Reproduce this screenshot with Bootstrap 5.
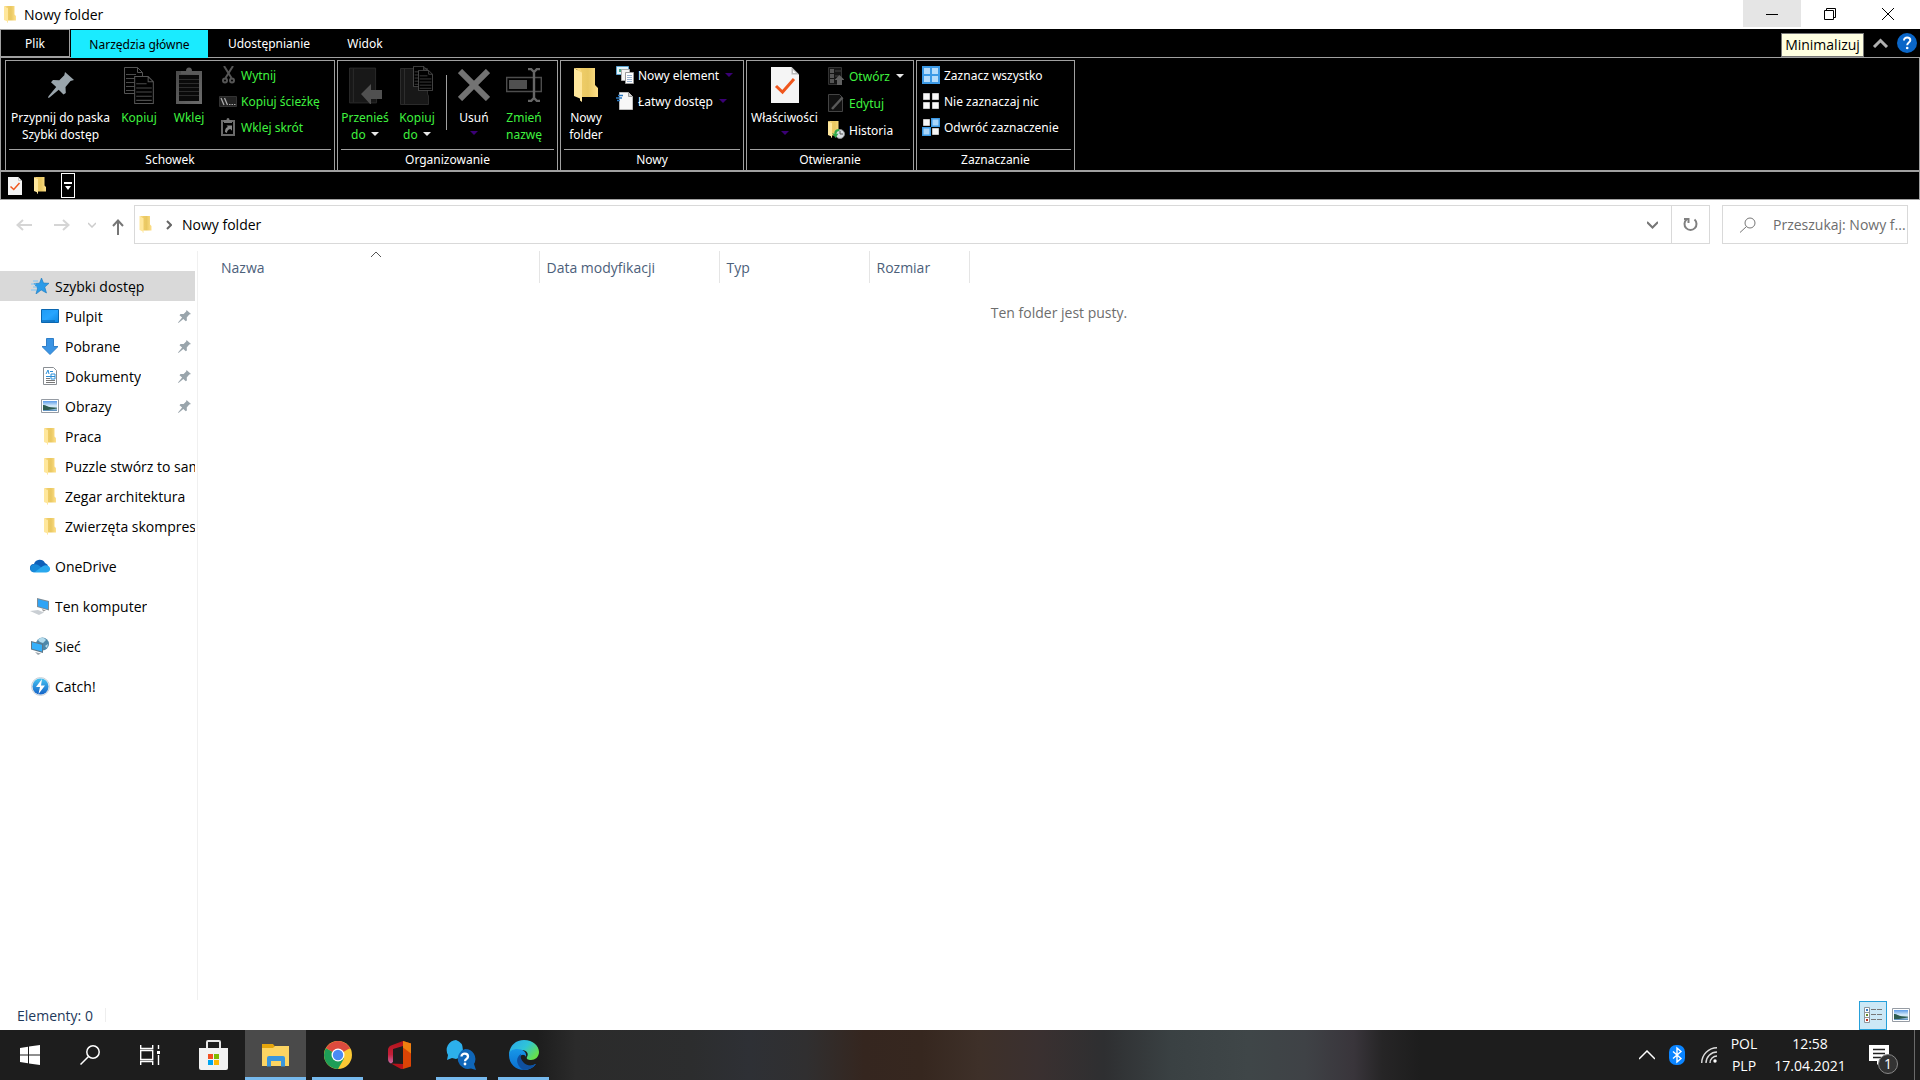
<!DOCTYPE html>
<html lang="pl">
<head>
<meta charset="utf-8">
<meta name="viewport" content="width=device-width, initial-scale=1">
<title>Nowy folder</title>
<link href="https://cdn.jsdelivr.net/npm/bootstrap@5.3.0/dist/css/bootstrap.min.css" rel="stylesheet">
<style>
:root{--line:#a0a0a0;--off:#3ff23f}
body{font-family:"Open Sans","Noto Sans",sans-serif;font-size:14px;line-height:20px;color:#000;background:#fff;overflow:hidden}
button{font:inherit;color:inherit;background:none;border:0;padding:0}
svg{display:block;flex:none}
a{color:inherit;text-decoration:none}
/* title bar */
.titlebar{height:29px;padding-right:3px}
.winbtn{width:58px;height:27px;display:flex;align-items:center;justify-content:center}
.winbtn.hot{background:#e5e5e5}
/* ribbon */
.ribbon{background:#000;color:#fff;font-family:"Noto Sans","Open Sans",sans-serif;font-size:12px;line-height:17px}
.tabrow{height:28px}
.tabrow .nav-link{color:#fff;padding:0;height:28px;display:flex;align-items:center;justify-content:center}
.tabrow .t-file{width:70px;border:1px solid var(--line)}
.tabrow .t-home{width:137px;margin-left:1px;margin-top:1px;background:#1aebff;color:#000}
.tabrow .t-share{width:122px}
.tabrow .t-view{width:70px}
.tabtools{padding-right:3px}
.tip{background:#ffffe1;color:#000;border:1px solid #767676;font-family:"Open Sans","Noto Sans",sans-serif;font-size:14px;line-height:22px;width:83px;height:24px;text-align:center}
.panel{border:1px solid var(--line);border-bottom-width:2px;padding:2px 4px 0;gap:2px;height:115px}
.grp{border:1px solid var(--line);border-bottom:0;height:110px;flex:none}
.g-clip{width:330px}
.g-org{width:221px}
.g-new{width:184px}
.g-open{width:168px}
.g-sel{width:159px}
.grp-body{height:88px;padding-top:4px}
.g-clip .grp-body{padding-left:1px}
.grp-name{border-top:1px solid var(--line);margin:0 3px;height:21px;line-height:19px;text-align:center}
.big{display:flex;flex-direction:column;align-items:center;text-align:center;white-space:nowrap;height:82px}
.big .ic{height:40px;margin-bottom:4px;display:flex;align-items:center}
.w107{width:107px}.w50{width:50px}.w54{width:54px}.w75{width:75px}
.off{color:var(--off)}
.vline{width:1px;height:55px;margin:10px 2px 0 4px;background:var(--line)}
.minis{padding-top:1px;gap:8px;margin-left:5px}
.minis.loose{padding-top:2px;gap:9px}
.mini{display:flex;align-items:center;height:18px;gap:4px;white-space:nowrap}
.mini .ic{width:18px;display:flex;justify-content:center}
.drop{display:inline-block;border:4px solid transparent;border-top-color:#e8e8e8;border-bottom:0;margin-left:2px;vertical-align:3px}
.drop.dim{border-top-color:#3a0075}
.big>.drop{margin:5px 0 0}
.qat{border:1px solid var(--line);border-top:0;height:28px;padding-left:7px}
.qatmore{border:1px solid #fff;width:14px;height:25px;margin-left:15px;display:flex;align-items:center;justify-content:center}
/* address row */
.addr-row{padding:5px 12px 7px 0}
.navbtns{width:134px;padding-left:16px}
.navbtns .fwd{margin-left:22px}
.navbtns .rec{margin-left:18px}
.addr{border:1px solid #d9d9d9;height:39px}
.addr-mark{margin:0 10px 0 14px}
.addr-end{width:38px}
.addr-end+.addr-end{border-left:1px solid #d9d9d9}
.find{border:1px solid #d9d9d9;width:186px;height:39px;margin-left:12px;padding-left:17px;gap:17px}
.find input{border:0;outline:0;width:134px;padding:0;color:#6d6d6d;background:none}
.find input::placeholder{color:#6d6d6d;opacity:1}
/* panes */
.side{width:198px;border-right:1px solid #f0f0f0;padding-top:20px}
.side a{display:flex;align-items:center;width:195px;height:30px;white-space:nowrap;overflow:hidden;padding-left:30px;gap:5px}
.side a.sub{padding-left:40px}
.side a .ic{width:20px;flex:none;display:flex;justify-content:center}
.side a.on{background:#d9d9d9}
.side .lbl{overflow:hidden;padding-top:2px}
.side .pin{margin-left:auto;margin-right:4px}
.side .top{margin-top:10px}
.cols{table-layout:fixed;width:771px;margin:0}
.cols th{font-weight:400;color:#4c607a;height:32px;padding:2px 0 0 7px;border-right:1px solid #e5e5e5;vertical-align:middle;position:relative}
.cols th:first-child{padding-left:23px;width:341px}
.sortmark{position:absolute;left:172px;top:0}
.void{color:#6d6d6d;margin-top:20px}
.status{height:30px;color:#1e395b;padding:0 10px 0 17px}
.status .count{padding-top:2px}
.status .sep{width:1px;height:14px;background:#eee;margin-left:12px}
.vbtn{width:28px;height:29px;margin-right:5px;display:flex;align-items:center;justify-content:center}
.vbtn.on{background:#cce8f6;border:1px solid #26a0da}
/* taskbar */
.task{height:50px;color:#fff;background:linear-gradient(90deg,#1d1d1d 0,#1d1d1d 28%,#2b2b2b 30%,#2c2d2e 36%,#2e3035 39%,#302f30 42%,#35261f 45%,#36271f 48%,#3e3029 51%,#3a3030 54%,#2e2f31 57.5%,#3a4143 61%,#3f4648 65%,#3f4246 68%,#39353b 70.5%,#262526 72%,#1d1d1d 74%)}
.tb{width:60px;height:50px;display:flex;align-items:center;justify-content:center}
.apps{gap:1px;margin-left:3px}
.app{width:61px;position:relative}
.app.cur{background:#4a4a4a}
.app.run::after{content:"";position:absolute;left:5px;right:5px;bottom:0;height:3px;background:#76b9ed}
.app.cur::after{left:0;right:0}
.tray{line-height:22px;text-align:center}
.tray .bt{width:16px;margin-left:14px}
.tray .lang{width:42px;margin-left:6px}
.tray .clock{width:90px;margin-right:3px}
.note{position:relative;width:57px;height:50px;border-right:1px solid #6a6a6a;margin-right:5px}
.note svg{position:absolute;left:11px;top:15px}
.note span{position:absolute;left:20px;top:24px;width:20px;height:20px;border-radius:50%;background:#333;border:1px solid #888;line-height:18px;font-size:14px}
</style>
<script src="https://cdn.jsdelivr.net/npm/bootstrap@5.3.0/dist/js/bootstrap.bundle.min.js"></script>
</head>
<body class="d-flex flex-column vh-100">
<svg width="0" height="0" class="position-absolute" aria-hidden="true">
<defs>
<linearGradient id="gf" x1="0" x2="1"><stop offset="0" stop-color="#f2cf6b"/><stop offset=".5" stop-color="#e9c862"/><stop offset="1" stop-color="#ffe08a"/></linearGradient>
<linearGradient id="gsky" x1="0" y1="0" x2="0" y2="1"><stop offset="0" stop-color="#5b9be8"/><stop offset=".5" stop-color="#d8ecfa"/><stop offset=".75" stop-color="#b5d4ea"/><stop offset="1" stop-color="#4f86b8"/></linearGradient>
<linearGradient id="gblue" x1="0" y1="0" x2="1" y2="1"><stop offset="0" stop-color="#1e9bf5"/><stop offset=".5" stop-color="#27a5ff"/><stop offset="1" stop-color="#0d86e0"/></linearGradient>
<linearGradient id="gcatch" x1="0" y1="0" x2="0" y2="1"><stop offset="0" stop-color="#45c3f2"/><stop offset="1" stop-color="#1463c8"/></linearGradient>
<linearGradient id="gclip" x1="0" y1="0" x2="1" y2="1"><stop offset="0" stop-color="#4a4a4a"/><stop offset="1" stop-color="#6c6c6c"/></linearGradient>
<linearGradient id="ge1" x1="0" y1="0" x2="1" y2=".6"><stop offset="0" stop-color="#2aa6ea"/><stop offset=".55" stop-color="#2fc4d8"/><stop offset="1" stop-color="#66e04c"/></linearGradient>
<linearGradient id="ge2" x1="0" y1="0" x2="0" y2="1"><stop offset="0" stop-color="#1797e8"/><stop offset="1" stop-color="#0b6fd0"/></linearGradient>
<linearGradient id="goff" x1="0" y1="0" x2="0" y2="1"><stop offset="0" stop-color="#b01318"/><stop offset=".6" stop-color="#c4203a"/><stop offset="1" stop-color="#c86aa8"/></linearGradient>
</defs>
<symbol id="folder" viewBox="0 0 24 34"><path d="M4 0h17v17l3 3v9H4z" fill="url(#gf)"/><path d="M0 0l8 4.500v29.500l-2-1.500v-2L0 28z" fill="#ffe79c"/><path d="M0 0h6l2 4.500z" fill="#f7d67a"/></symbol>
<symbol id="pushpin" viewBox="0 0 26 26"><path d="M17 0l9 8-3.500 1-5 6 .3 6-2.300 1.500-4.800-4.700L1.500 25.500 0 26l.5-1.700 7.700-9.300L3 10.300 5 8l6.300.2 5-5z" fill="#9aa5ac"/></symbol>
<symbol id="pic" viewBox="0 0 18 14"><path d="M.5.5h17v13H.5z" fill="#fff" stroke="#959ba3"/><path d="M2 2h14v10H2z" fill="url(#gsky)"/><path d="M2 6c3 .2 4 1.500 8 2.300l6 .5v.7l-9 1.500H2z" fill="#2e5c50"/></symbol>
<symbol id="check" viewBox="0 0 28 36"><path d="M0 0h20.500L28 7.500V36H0z" fill="#f5f5f5"/><path d="M20.500 0v7.500H28z" fill="#b9b9b9"/><path d="M22 3v3h3z" fill="#fff"/><path d="M5 19l6.500 6L23 12" fill="none" stroke="#f0561d" stroke-width="3"/></symbol>
<symbol id="sheet" viewBox="0 0 19 27"><path d="M.5.5h13l5 5v21H.5zM13.500.5v5h5" fill="#000" stroke="#555"/><path d="M2 7.500h10M2 11.500h15M2 15.500h15M2 19.500h15M2 23.500h15" stroke="#4b4b4b"/></symbol>
<symbol id="book" viewBox="0 0 30 37"><path d="M.5.5h27V26l1 2v8.500H.5z" fill="#181818" stroke="#2b2b2b"/><path d="M4.500 1v35" stroke="#2d2d2d"/></symbol>
</svg>

<header class="titlebar d-flex align-items-start bg-white">
  <div class="d-flex align-items-center ps-1 h-100 gap-2"><svg width="12" height="17"><use href="#folder"/></svg><span>Nowy folder</span></div>
  <div class="ms-auto d-flex">
    <button class="winbtn hot" aria-label="Minimalizuj"><svg width="12" height="12"><path d="M0 6.500h12" stroke="#000"/></svg></button>
    <button class="winbtn" aria-label="Przywróć"><svg width="12" height="12" fill="none" stroke="#000"><path d="M.5 2.500h9v9h-9zM2.500 2.500v-2h9v9h-2"/></svg></button>
    <button class="winbtn" aria-label="Zamknij"><svg width="12" height="12"><path d="M0 0l12 12M12 0L0 12" stroke="#000"/></svg></button>
  </div>
</header>

<section class="ribbon">
  <div class="tabrow d-flex">
    <nav class="nav">
      <a class="nav-link t-file" href="#">Plik</a>
      <a class="nav-link t-home" href="#">Narzędzia główne</a>
      <a class="nav-link t-share" href="#">Udostępnianie</a>
      <a class="nav-link t-view" href="#">Widok</a>
    </nav>
    <div class="tabtools ms-auto d-flex align-items-center">
      <div class="tip mt-1" role="tooltip">Minimalizuj</div>
      <button class="ms-2" aria-label="Zwiń wstążkę"><svg width="17" height="10"><path d="M2 9l6.500-6.500L15 9" fill="none" stroke="#b0b0b0" stroke-width="3"/></svg></button>
      <button class="ms-2" aria-label="Pomoc"><svg width="20" height="20"><circle cx="10" cy="10" r="10" fill="#0a66c8"/><path d="M7 7.500c0-4 6.300-3.600 6.300-.3 0 2.400-3.100 2.400-3.100 5" fill="none" stroke="#fff" stroke-width="2"/><circle cx="10.200" cy="15" r="1.300" fill="#fff"/></svg></button>
    </div>
  </div>

  <div class="panel d-flex">
    <div class="grp g-clip">
      <div class="grp-body d-flex">
        <button class="big w107"><span class="ic"><svg width="26" height="26"><use href="#pushpin"/></svg></span>Przypnij do paska<br>Szybki dostęp</button>
        <button class="big w50 off"><span class="ic"><svg width="31" height="37"><use href="#sheet" width="19" height="27"/><use href="#sheet" x="10" y="9" width="20" height="28"/></svg></span>Kopiuj</button>
        <button class="big w50 off"><span class="ic"><svg width="26" height="37"><path d="M0 4h26v33H0z" fill="url(#gclip)"/><path d="M3 8h20v26H3z" fill="#0a0a0a"/><path d="M3 12.500h20M3 16.500h20M3 20.500h20M3 24.500h20M3 28.500h20" stroke="#2c2c2c"/><path d="M5 7V4h5a3 3.500 0 0 1 6 0h5v3z" fill="#5a5a5a"/></svg></span>Wklej</button>
        <div class="minis d-flex flex-column">
          <button class="mini off"><span class="ic"><svg width="13" height="18" fill="none" stroke="#555" stroke-width="2"><path d="M2 0l7.500 12M11 0L3.500 12"/><circle cx="3" cy="14.500" r="2"/><circle cx="10" cy="14.500" r="2"/></svg></span>Wytnij</button>
          <button class="mini off"><span class="ic"><svg width="18" height="11"><path d="M.5.5h17v10H.5z" fill="#222" stroke="#333"/><path d="M2 2l3 7M5.500 2l3 7" stroke="#aaa" stroke-width="1.300"/><path d="M10 8.500h1.500M12.500 8.500H14M15 8.500h1.500" stroke="#aaa"/></svg></span>Kopiuj ścieżkę</button>
          <button class="mini off"><span class="ic"><svg width="14" height="18"><path d="M1 3h12v14H1z" fill="none" stroke="#6a6a6a" stroke-width="2"/><path d="M3 5V2h2.500a1.500 2 0 0 1 3 0H11v3z" fill="#777"/><path d="M4 14c0-3 1-4.500 3-5L5.500 7.500H11v5.300L9.300 11C7 11.500 6 13 6 15z" fill="#888"/></svg></span>Wklej skrót</button>
        </div>
      </div>
      <div class="grp-name">Schowek</div>
    </div>

    <div class="grp g-org">
      <div class="grp-body d-flex">
        <button class="big w54 off"><span class="ic"><svg width="33" height="37"><use href="#book" width="29" height="37"/><path d="M12 27l10-10v6h11v9H22v6z" fill="#505050"/></svg></span>Przenieś<span>do <i class="drop"></i></span></button>
        <button class="big w50 off"><span class="ic"><svg width="34" height="39"><use href="#book" y="2" width="30" height="37"/><use href="#sheet" x="13" width="15" height="21"/><use href="#sheet" x="18" y="4" width="15" height="21"/></svg></span>Kopiuj<span>do <i class="drop"></i></span></button>
        <div class="vline"></div>
        <button class="big w50"><span class="ic"><svg width="32" height="32"><path d="M2 2l28 28M30 2L2 30" stroke="#737373" stroke-width="6"/></svg></span>Usuń<i class="drop dim"></i></button>
        <button class="big w50 off"><span class="ic"><svg width="36" height="34" fill="none"><path d="M.7 9.500h34.600v14H.7z" stroke="#4d4d4d" stroke-width="1.400"/><path d="M3 12h18v9H3z" fill="#505050"/><path d="M22 1h3l3 3 3-3h3M22 33h3l3-3 3 3h3M28 4v26" stroke="#666" stroke-width="2.400"/></svg></span>Zmień<br>nazwę</button>
      </div>
      <div class="grp-name">Organizowanie</div>
    </div>

    <div class="grp g-new">
      <div class="grp-body d-flex">
        <button class="big w50"><span class="ic"><svg width="24" height="34"><use href="#folder"/></svg></span>Nowy<br>folder</button>
        <div class="minis d-flex flex-column">
          <button class="mini"><span class="ic"><svg width="18" height="18"><path d="M.5.500h12v8H.5z" fill="#e4f3fb" stroke="#5aa3cf"/><path d="M3 3h3v3H3z" fill="#4a8"/><path d="M5.500 3.500h8v11h-8z" fill="#f4f4f4" stroke="#aaa"/><path d="M9.500 6.500h8v11h-8z" fill="#fff" stroke="#999"/><path d="M11 9.500h5M11 11.500h5M11 13.500h5M11 15.500h5" stroke="#9bb4d0"/></svg></span>Nowy element<i class="drop dim"></i></button>
          <button class="mini"><span class="ic"><svg width="18" height="18"><path d="M3.500.500h9l4 4v13h-13z" fill="#f7f7f7" stroke="#bbb"/><path d="M12.500.500v4h4" fill="#ccc" stroke="#999"/><path d="M2 3.500h5M0 6h6M1 8.500h3" stroke="#2b78c0" stroke-width="1.300"/></svg></span>Łatwy dostęp<i class="drop dim"></i></button>
        </div>
      </div>
      <div class="grp-name">Nowy</div>
    </div>

    <div class="grp g-open">
      <div class="grp-body d-flex">
        <button class="big w75"><span class="ic"><svg width="28" height="36"><use href="#check"/></svg></span>Właściwości<i class="drop dim"></i></button>
        <div class="minis loose d-flex flex-column">
          <button class="mini off"><span class="ic"><svg width="16" height="18"><path d="M.5.500h13v17H.5z" fill="#151515" stroke="#333"/><path d="M2 2h4v4H2zM2 7h4v4H2zM2 12h4v4H2z" fill="#555"/><path d="M7 4h6M7 9h4" stroke="#444"/><path d="M11.500 8l5 5H14v5H9v-5H6.500z" fill="#606060"/></svg></span>Otwórz<i class="drop"></i></button>
          <button class="mini off"><span class="ic"><svg width="16" height="18"><path d="M.5.500h11l3 3v14H.5z" fill="#111" stroke="#444"/><path d="M4 15L14.500 3.500" stroke="#5a5a5a" stroke-width="2.500"/></svg></span>Edytuj</button>
          <button class="mini"><span class="ic"><svg width="17" height="18"><use href="#folder" width="12" height="17"/><circle cx="12" cy="13" r="4.500" fill="#d8dde2" stroke="#888"/><path d="M12 10v3h3" stroke="#555" fill="none"/><path d="M11 8c-4 0-5 3-4.500 5L4 12l3.500 5 3-4.500-2 .5c0-2 1-3 3-3z" fill="#2fa84a"/></svg></span>Historia</button>
        </div>
      </div>
      <div class="grp-name">Otwieranie</div>
    </div>

    <div class="grp g-sel">
      <div class="grp-body d-flex">
        <div class="minis d-flex flex-column">
          <button class="mini"><span class="ic"><svg width="18" height="18"><path d="M0 0h18v18H0z" fill="#3c9ae6"/><path d="M2 2h6v6H2zM10 2h6v6h-6zM2 10h6v6H2zM10 10h6v6h-6z" fill="#b5dcfb"/></svg></span>Zaznacz wszystko</button>
          <button class="mini"><span class="ic"><svg width="18" height="18"><path d="M1.500 1.500h6v6h-6zM10.500 1.500h6v6h-6zM1.500 10.500h6v6h-6zM10.500 10.500h6v6h-6z" fill="#f7f7f7" stroke="#c8c8c8"/></svg></span>Nie zaznaczaj nic</button>
          <button class="mini"><span class="ic"><svg width="18" height="18"><path d="M1.500 1.500h6v6h-6zM10.500 10.500h6v6h-6z" fill="#f7f7f7" stroke="#c8c8c8"/><path d="M9.800.800h7.400v7.400H9.800zM.8 9.800h7.400v7.400H.8z" fill="#a8d5fa" stroke="#3c9ae6" stroke-width="1.500"/></svg></span>Odwróć zaznaczenie</button>
        </div>
      </div>
      <div class="grp-name">Zaznaczanie</div>
    </div>
  </div>

  <div class="qat d-flex align-items-center">
    <button aria-label="Właściwości"><svg width="14" height="18"><use href="#check"/></svg></button>
    <button class="ms-2 ps-1" aria-label="Nowy folder"><svg width="12" height="17"><use href="#folder"/></svg></button>
    <button class="qatmore" aria-label="Dostosuj pasek"><svg width="8" height="8"><path d="M0 0h8v2H0zM1 4h6L4 8z" fill="#fff"/></svg></button>
  </div>
</section>

<div class="addr-row d-flex">
  <div class="navbtns d-flex align-items-center">
    <button aria-label="Wstecz"><svg width="16" height="12" fill="none" stroke="#d5d5d5" stroke-width="2"><path d="M16 6H1.500M7 1L1.500 6 7 11"/></svg></button>
    <button class="fwd" aria-label="Dalej"><svg width="16" height="12" fill="none" stroke="#d5d5d5" stroke-width="2"><path d="M0 6h14.500M9 1l5.500 5L9 11"/></svg></button>
    <button class="rec" aria-label="Ostatnie"><svg width="8" height="6" fill="none" stroke="#ccc" stroke-width="1.500"><path d="M0 1l4 4 4-4"/></svg></button>
    <button class="ms-3 mt-1" aria-label="W górę"><svg width="12" height="16" fill="none" stroke="#767676" stroke-width="2"><path d="M6 16V1.500M1 7l5-5.500L11 7"/></svg></button>
  </div>
  <div class="addr d-flex flex-grow-1">
    <div class="d-flex align-items-center flex-grow-1 ps-1"><svg width="13" height="17"><use href="#folder"/></svg><svg class="addr-mark" width="6" height="10" fill="none" stroke="#666" stroke-width="2"><path d="M1 1l4 4-4 4"/></svg><a href="#">Nowy folder</a></div>
    <button class="addr-end d-flex align-items-center justify-content-center" aria-label="Poprzednie lokalizacje"><svg width="11" height="8" fill="none" stroke="#767676" stroke-width="2"><path d="M0 1l5.500 5.500L11 1"/></svg></button>
    <button class="addr-end d-flex align-items-center justify-content-center" aria-label="Odśwież"><svg width="15" height="15" fill="none" stroke="#808080" stroke-width="2"><path d="M3.500 2.500a6 6 0 1 0 8 0M1 2h4.500v4"/></svg></button>
  </div>
  <div class="find d-flex align-items-center">
    <label for="q" aria-label="Szukaj"><svg width="16" height="16" fill="none" stroke="#767676"><circle cx="10" cy="6" r="5"/><path d="M6.500 9.500L0 15.500"/></svg></label>
    <input id="q" type="text" placeholder="Przeszukaj: Nowy f...">
  </div>
</div>

<main class="d-flex flex-grow-1">
  <nav class="side flex-shrink-0">
    <a class="on" href="#"><span class="ic"><svg width="18" height="16"><path d="M10.500 0l2 5 5.500.3-4.200 3.800L15.500 15l-5.300-3L5 16l1.500-6L3 5.500l5.500-.3z" fill="#2b9be8" stroke="#1a78c0" stroke-width=".6"/><path d="M2 3h5M0 6h5M2 9h4M0 12h5" stroke="#7cc4f5"/></svg></span><span class="lbl">Szybki dostęp</span></a>
    <a class="sub" href="#"><span class="ic"><svg width="18" height="14"><path d="M.5.500h17v13H.5z" fill="url(#gblue)" stroke="#0a66b0"/><path d="M1 12h13" stroke="#0a5a9c"/></svg></span><span class="lbl">Pulpit</span><svg class="pin" width="13" height="13"><use href="#pushpin"/></svg></a>
    <a class="sub" href="#"><span class="ic"><svg width="16" height="17"><path d="M4.500.500h7v8H16l-8 8-8-8h4.500z" fill="#3a94e4" stroke="#2f7ec8"/></svg></span><span class="lbl">Pobrane</span><svg class="pin" width="13" height="13"><use href="#pushpin"/></svg></a>
    <a class="sub" href="#"><span class="ic"><svg width="14" height="18"><path d="M.5.500h10l3 3v14H.5z" fill="#fff" stroke="#8a8f94"/><path d="M3 7l2-4 1 4M7 4.500h3M3 9.500h9M8 7h4v5H8z" stroke="#2b8fd8" fill="none"/><path d="M3 11.500h4M3 13.500h9M3 15.500h9" stroke="#777"/></svg></span><span class="lbl">Dokumenty</span><svg class="pin" width="13" height="13"><use href="#pushpin"/></svg></a>
    <a class="sub" href="#"><span class="ic"><svg width="18" height="14"><use href="#pic"/></svg></span><span class="lbl">Obrazy</span><svg class="pin" width="13" height="13"><use href="#pushpin"/></svg></a>
    <a class="sub" href="#"><span class="ic"><svg width="12" height="17"><use href="#folder"/></svg></span><span class="lbl">Praca</span></a>
    <a class="sub" href="#"><span class="ic"><svg width="12" height="17"><use href="#folder"/></svg></span><span class="lbl">Puzzle stwórz to sam</span></a>
    <a class="sub" href="#"><span class="ic"><svg width="12" height="17"><use href="#folder"/></svg></span><span class="lbl">Zegar architektura</span></a>
    <a class="sub" href="#"><span class="ic"><svg width="12" height="17"><use href="#folder"/></svg></span><span class="lbl">Zwierzęta skompresowane</span></a>
    <a class="top" href="#"><span class="ic"><svg width="20" height="14"><path d="M4 13a4 4 0 0 1 0-8 6 6 0 0 1 11-1 5 5 0 0 1 1 9z" fill="#0d5fb8"/><path d="M4 13.500a4 4 0 0 1 1-8.300c3 0 5 2 7 3.800z" fill="#1688d8"/><path d="M4 13.500L13 7c4-2 8 1 7 4-.5 1.500-2 2.500-4 2.500z" fill="#29a8ee"/></svg></span><span class="lbl">OneDrive</span></a>
    <a class="top" href="#"><span class="ic"><svg width="20" height="17"><path d="M7 0l12 3v9.500L7 9z" fill="#7d8b96"/><path d="M8 1.200l10 2.500v7.500L8 8.300z" fill="#30a4f5"/><path d="M0 13l8-1 6 2.500L9 17z" fill="#c9ced3"/><path d="M12 11l4 1.500-3 1z" fill="#999"/></svg></span><span class="lbl">Ten komputer</span></a>
    <a class="top" href="#"><span class="ic"><svg width="20" height="18"><circle cx="12.500" cy="7" r="6.500" fill="#4d88aa"/><path d="M8 3c2-3 6-3 8 0l-3 3-3-1zM15 9l3-2-1 4z" fill="#b5dced"/><path d="M1 4l12 3v9L1 12.500z" fill="#5f7787"/><path d="M2 5.300l10 2.500v6.700L2 11.700z" fill="#35b0fa"/><path d="M5 15l6 1.500-3 1.500z" fill="#9aa4ab"/></svg></span><span class="lbl">Sieć</span></a>
    <a class="top" href="#"><span class="ic"><svg width="19" height="19"><circle cx="9.500" cy="9.500" r="9" fill="#e8edf2" stroke="#ccd3da"/><circle cx="9.500" cy="9.500" r="8" fill="url(#gcatch)"/><path d="M11 2L5 10h4l-1.500 7L14 8.500h-4z" fill="#fff"/></svg></span><span class="lbl">Catch!</span></a>
  </nav>
  <section class="flex-grow-1">
    <table class="cols">
      <thead><tr>
        <th scope="col">Nazwa<svg class="sortmark" width="12" height="7"><path d="M1 6l5-5 5 5" fill="none" stroke="#555"/></svg></th>
        <th scope="col" style="width:180px">Data modyfikacji</th>
        <th scope="col" style="width:150px">Typ</th>
        <th scope="col" style="width:100px">Rozmiar</th>
      </tr></thead>
    </table>
    <p class="void text-center mb-0">Ten folder jest pusty.</p>
  </section>
</main>

<footer class="status d-flex align-items-center">
  <span class="count">Elementy: 0</span><span class="sep"></span>
  <button class="vbtn on ms-auto" aria-label="Szczegóły"><svg width="18" height="16"><path d="M.5.500h5v15h-5zM.5 5.500h5M.5 10.500h5" fill="#fff" stroke="#8e959b"/><path d="M2 2h2v2H2z" fill="#3a78c0"/><path d="M2 7h2v2H2z" fill="#6a8a2a"/><path d="M2 12h2v2H2z" fill="#c03020"/><path d="M7 2.500h5M13 2.500h5M7 7.500h5M13 7.500h5M7 12.500h5M13 12.500h5" stroke="#777"/></svg></button>
  <button aria-label="Duże ikony"><svg width="18" height="14"><use href="#pic"/></svg></button>
</footer>

<div class="task d-flex">
  <button class="tb" aria-label="Start"><svg width="20" height="20"><path d="M0 3l8-1.200v7.700H0zM9 1.600L20 0v9.500H9zM0 10.500h8v7.700L0 17zM9 10.500h11V20L9 18.400z" fill="#fff"/></svg></button>
  <button class="tb" aria-label="Wyszukaj"><svg width="20" height="20" fill="none" stroke="#fff" stroke-width="1.500"><circle cx="13" cy="7" r="6.200"/><path d="M8.500 11.500L.5 19.500"/></svg></button>
  <button class="tb" aria-label="Widok zadań"><svg width="20" height="20" fill="none" stroke="#fff" stroke-width="1.400"><path d="M.7 0v3.500h12V0M.7 20v-3.500h12V20M.7 5.500h12v9H.7zM18.500 0v4M18.500 10v10"/><path d="M17 6h3v3h-3z" fill="#fff" stroke="none"/></svg></button>
  <div class="apps d-flex">
  <button class="tb app" aria-label="Sklep"><svg width="29" height="30"><path d="M8 9V2q0-1 1-1h11q1 0 1 1v7" fill="none" stroke="#e8e8e8" stroke-width="2"/><path d="M0 8h29v20q0 2-2 2H2q-2 0-2-2z" fill="#f2f2f2"/><path d="M9 14h5v5H9z" fill="#f25022"/><path d="M15 14h5v5h-5z" fill="#7fba00"/><path d="M9 20h5v5H9z" fill="#00a4ef"/><path d="M15 20h5v5h-5z" fill="#ffb900"/></svg></button>
  <button class="tb app cur run" aria-label="Eksplorator plików"><svg width="28" height="23"><path d="M0 0h11l2 2.500V6H0z" fill="#e5a50c"/><path d="M0 4h11l2-2h14v20H0z" fill="#fcd462"/><path d="M5 22.500V14q0-2 2-2h14q2 0 2 2v8.500h-4V17H9v5.500z" fill="#3a96dd"/></svg></button>
  <button class="tb app run" aria-label="Chrome"><svg width="28" height="28"><circle cx="14" cy="14" r="14" fill="#fcc934"/><path d="M14 14L1.900 7A14 14 0 0 0 14 28l6-10.500z" fill="#1e9e57"/><path d="M14 14L1.900 7a14 14 0 0 1 24.200 0z" fill="#dd4b3e"/><path d="M14 7.500h12.400L26.100 7 18 8z" fill="#dd4b3e"/><circle cx="14" cy="14" r="6.500" fill="#fff"/><circle cx="14" cy="14" r="5.200" fill="#4a8af4"/></svg></button>
  <button class="tb app" aria-label="Office"><svg width="24" height="28"><path d="M15 0l8 2.500v23L15 28z" fill="#dc4405"/><path d="M15 0L3 4.500Q0 6 0 9v9q0 3 3 4.500l2-1.500V8l10-3z" fill="url(#goff)"/><path d="M3 22.500L15 23v5h-2z" fill="#b5121b"/><path d="M15 0l8 2.500v10l-8-6z" fill="#f08010"/></svg></button>
  <button class="tb app run" aria-label="Uzyskaj pomoc"><svg width="31" height="30"><path d="M10 0a10 10 0 0 1 0 19l-4-1-5 2 1-5A10 10 0 0 1 10 0z" fill="#2cb0ec"/><path d="M19 9a10 10 0 0 1 9 15l2 6-5-1.500A10 10 0 1 1 19 9z" fill="#0f66b8"/><path d="M15.500 16.500c0-4 6.500-3.600 6.500 0 0 2.400-3 2.200-3 4.800" fill="none" stroke="#fff" stroke-width="2.300"/><circle cx="19" cy="24" r="1.400" fill="#fff"/></svg></button>
  <button class="tb app run" aria-label="Edge"><svg width="30" height="30"><path d="M0 14C1 5 7 0 15 0c9 0 15 6 15 12 0 5-4 8-8 8-3 0-5-1-4-3 2-3 0-7-5-7-6 0-10 3-13 4z" fill="url(#ge1)"/><path d="M0 15c0-4 4-6 8-6 6 0 10 3 9 8-1-3-5-3-6 0-2 5 3 10 9 9 3 0 6-2 7-2-3 4-7 6-12 6C7 30 0 24 0 15z" fill="url(#ge2)"/><path d="M12 14c-5 3-6 10 2 16 6 0 11-3 13-6-4 2-9 2-12-1s-4-6-3-9z" fill="#0f50a0"/></svg></button>
  </div>

  <div class="tray ms-auto d-flex align-items-center">
    <button aria-label="Ukryte ikony"><svg width="16" height="10" fill="none" stroke="#fff" stroke-width="1.500"><path d="M0 9l8-8 8 8"/></svg></button>
    <button class="bt" aria-label="Bluetooth"><svg width="16" height="20"><rect width="16" height="20" rx="7" fill="#0a84ff"/><path d="M4 6.500l8 7-4 3.500V3l4 3.500-8 7" fill="none" stroke="#fff" stroke-width="1.400"/></svg></button>
    <button class="ms-3" aria-label="Sieć"><svg width="16" height="16" fill="none" stroke="#ddd" stroke-width="1.400"><path d="M.7 16A15.300 15.300 0 0 1 16 .7M5 16A11 11 0 0 1 16 5M9 16a7 7 0 0 1 7-7"/><circle cx="14" cy="14" r="1.700" fill="#fff" stroke="none"/></svg></button>
    <button class="lang">POL<br>PLP</button>
    <button class="clock">12:58<br>17.04.2021</button>
    <button class="note" aria-label="Powiadomienia"><svg width="20" height="20"><path d="M0 0h20v16h-8l-4 4v-4H0z" fill="#fff"/><path d="M4 4.500h12M4 8.500h12M4 12.500h8" stroke="#222" stroke-width="1.300"/></svg><span>1</span></button>
  </div>
</div>
</body>
</html>
